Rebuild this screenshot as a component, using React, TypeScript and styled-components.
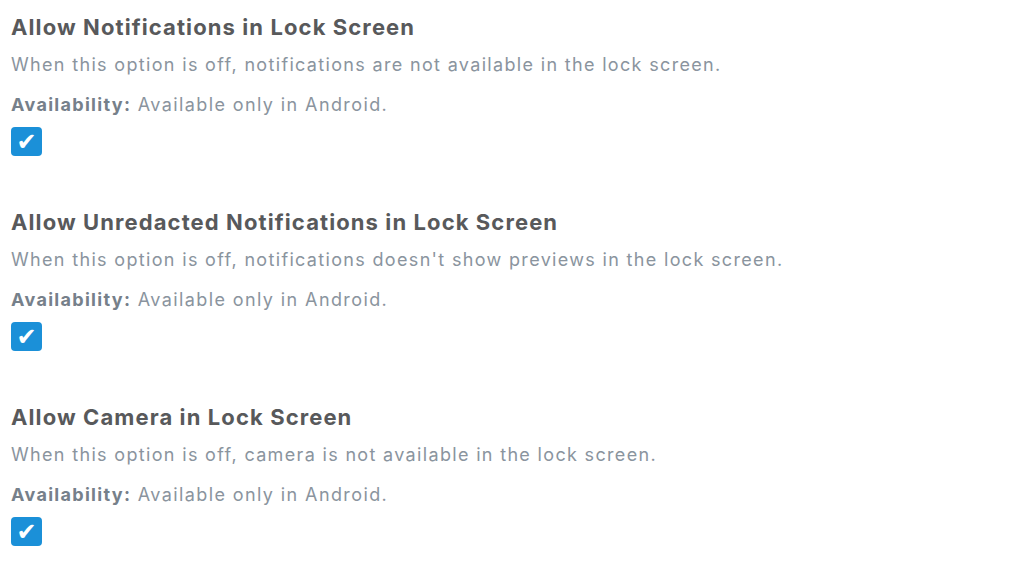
import { createGlobalStyle, styled } from 'styled-components';

const GlobalStyle = createGlobalStyle`
  body {
    margin: 0;
    background: #ffffff;
    font-family: Inter, 'Noto Sans', sans-serif;
  }
`;

interface SettingItemProps {
  title: string;
  description: string;
  availability: string;
  checked: boolean;
}

const settings: SettingItemProps[] = [
  {
    title: 'Allow Notifications in Lock Screen',
    description: 'When this option is off, notifications are not available in the lock screen.',
    availability: 'Available only in Android.',
    checked: true,
  },
  {
    title: 'Allow Unredacted Notifications in Lock Screen',
    description: "When this option is off, notifications doesn't show previews in the lock screen.",
    availability: 'Available only in Android.',
    checked: true,
  },
  {
    title: 'Allow Camera in Lock Screen',
    description: 'When this option is off, camera is not available in the lock screen.',
    availability: 'Available only in Android.',
    checked: true,
  },
];

// 설정 항목 하나 - 제목, 설명, 사용 가능 여부, 체크박스
const SettingItem = ({ title, description, availability, checked }: SettingItemProps) => {
  return (
    <ItemWrap>
      <ItemTitle>{title}</ItemTitle>
      <ItemDesc>{description}</ItemDesc>
      <ItemAvailability>
        <strong>Availability:</strong> {availability}
      </ItemAvailability>
      <CheckBox $checked={checked} role="checkbox" aria-checked={checked}>
        {checked && '✔'}
      </CheckBox>
    </ItemWrap>
  );
};

const App = () => {
  return (
    <>
      <GlobalStyle />
      <SettingsList>
        {settings.map((item) => (
          <SettingItem key={item.title} {...item} />
        ))}
      </SettingsList>
    </>
  );
};

const SettingsList = styled.main`
  display: flex;
  flex-direction: column;
  gap: 52px;
  padding: 13px 0 0 11px;
`;

const ItemWrap = styled.section`
  display: flex;
  flex-direction: column;
  align-items: flex-start;
`;

const ItemTitle = styled.h2`
  margin: 0;
  font-size: 22px;
  line-height: 28px;
  font-weight: 700;
  color: #58595b;
  letter-spacing: 1.1px;
`;

const ItemDesc = styled.p`
  margin: 12px 0 0;
  font-size: 18px;
  line-height: 24px;
  font-weight: 400;
  color: #8a949e;
  letter-spacing: 1.33px;
`;

const ItemAvailability = styled.p`
  margin: 16px 0 0;
  font-size: 18px;
  line-height: 24px;
  color: #8a949e;
  letter-spacing: 1.4px;

  strong {
    font-weight: 700;
    color: #76808a;
    letter-spacing: 1.3px;
  }
`;

const CheckBox = styled.div<{ $checked: boolean }>`
  display: flex;
  justify-content: center;
  align-items: center;
  width: 31px;
  height: 29px;
  margin-top: 10px;
  border-radius: 4px;
  background: ${({ $checked }) => ($checked ? '#1b90d8' : '#ffffff')};
  border: ${({ $checked }) => ($checked ? 'none' : '1px solid #c5ccd3')};
  color: #ffffff;
  font-family: 'DejaVu Sans', sans-serif;
  font-size: 24px;
  line-height: 1;
`;

export default App;
